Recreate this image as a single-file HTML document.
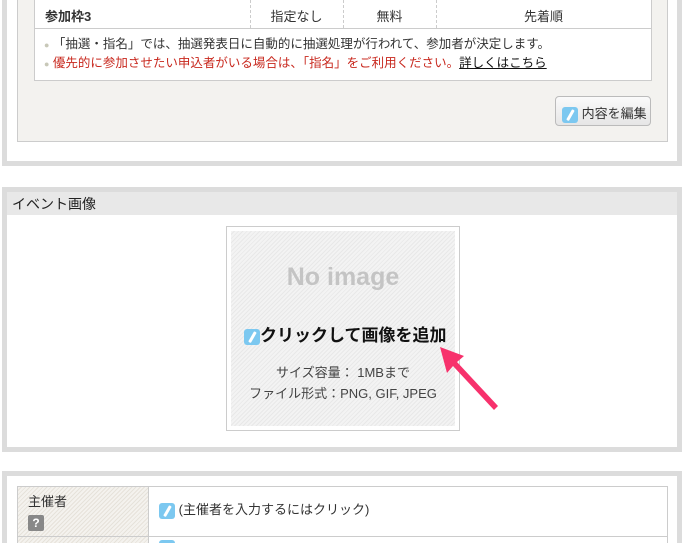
<!DOCTYPE html>
<html><head><meta charset="utf-8"><style>
*{margin:0;padding:0;box-sizing:border-box}
html,body{width:684px;height:543px;overflow:hidden}
body{background:#fff;font-family:"Liberation Sans","Noto Sans CJK JP",sans-serif;font-size:12px;color:#333;position:relative}
.abs{position:absolute}
.pen{display:inline-block;width:16px;height:16px;background:#7cc8f0;border-radius:3px;position:relative;vertical-align:middle}
.pen:after{content:"";position:absolute;left:7px;top:2px;width:2.5px;height:12px;background:#fff;transform:rotate(30deg);border-radius:1px}
.hatch{background:repeating-linear-gradient(135deg,#f3f3f3 0,#f3f3f3 2px,#e8e8e8 2px,#e8e8e8 3px)}
.hatch2{background:repeating-linear-gradient(135deg,#f4f2ee 0,#f4f2ee 2px,#e6e2da 2px,#e6e2da 3px)}
</style></head><body>
<div class="abs" style="left:2px;top:0;width:680px;height:166px;border:5px solid #dcdcdc;border-top:none;background:#fff"></div>
<div class="abs" style="left:17px;top:0;width:651px;height:142px;border:1px solid #ccc;border-top:none;background:#f3f2ef"></div>
<div class="abs" style="left:34px;top:0;width:618px;height:81px;border:1px solid #ccc;border-top:none;background:#fff"></div>
<div class="abs" style="left:34px;top:28px;width:618px;height:1px;background:#ccc"></div>
<div class="abs" style="left:250px;top:0;height:28px;border-left:1px dashed #ccc"></div>
<div class="abs" style="left:343px;top:0;height:28px;border-left:1px dashed #ccc"></div>
<div class="abs" style="left:436px;top:0;height:28px;border-left:1px dashed #ccc"></div>
<div class="abs" style="left:45px;top:6px;font-weight:bold;font-size:13px">参加枠3</div>
<div class="abs" style="left:250px;top:6px;width:93px;text-align:center;font-size:13px">指定なし</div>
<div class="abs" style="left:343px;top:6px;width:93px;text-align:center;font-size:13px">無料</div>
<div class="abs" style="left:436px;top:6px;width:215px;text-align:center;font-size:13px">先着順</div>
<div class="abs" style="left:44px;top:33px;font-size:12.5px;white-space:nowrap"><span style="color:#c8c8b8;font-size:9px">●</span> 「抽選・指名」では、抽選発表日に自動的に抽選処理が行われて、参加者が決定します。</div>
<div class="abs" style="left:44px;top:52px;font-size:12.5px;color:#c8281e;white-space:nowrap"><span style="color:#c8c8b8;font-size:9px">●</span> 優先的に参加させたい申込者がいる場合は、「指名」をご利用ください。<span style="color:#111;text-decoration:underline">詳しくはこちら</span></div>
<div class="abs" style="left:555px;top:96px;width:96px;height:30px;border:1px solid #bbb;border-radius:4px;background:linear-gradient(#fafafa,#e6e6e6);padding:6px 0 0 6px;font-size:13px;color:#333;white-space:nowrap"><span class="pen"></span> 内容を編集</div>
<div class="abs" style="left:2px;top:187px;width:680px;height:265px;border:5px solid #dcdcdc;background:#fff"></div>
<div class="abs" style="left:7px;top:192px;width:670px;height:23px;background:#e8e8e8;padding:2px 0 0 5px;font-size:14px;color:#222">イベント画像</div>
<div class="abs" style="left:226px;top:226px;width:234px;height:205px;border:1px solid #ccc;background:#fff"></div>
<div class="abs hatch" style="left:231px;top:231px;width:224px;height:195px"></div>
<div class="abs" style="left:231px;top:263px;width:224px;text-align:center;font-size:25px;font-weight:bold;color:#c4c4c4">No image</div>
<div class="abs" style="left:244px;top:321px;font-size:17px;font-weight:bold;color:#111;white-space:nowrap"><span class="pen"></span>クリックして画像を追加</div>
<div class="abs" style="left:231px;top:362px;width:224px;text-align:center;font-size:13px;color:#444;line-height:21px">サイズ容量： 1MBまで<br>ファイル形式：PNG, GIF, JPEG</div>
<svg class="abs" style="left:430px;top:340px" width="80" height="80"><path d="M10 7 L34 16 L27 22 L68 66 L64 70 L23 26 L17 33 Z" fill="#f7316c"/></svg>
<div class="abs" style="left:0;top:471px;width:684px;height:72px;overflow:hidden">
<div class="abs" style="left:2px;top:0;width:680px;height:72px;border:5px solid #dcdcdc;border-bottom:none;background:#fff"></div>
<div class="abs" style="left:17px;top:15px;width:651px;height:57px;border:1px solid #ccc;border-bottom:none"></div>
<div class="abs hatch2" style="left:18px;top:16px;width:130px;height:56px"></div>
<div class="abs" style="left:148px;top:16px;width:1px;height:56px;background:#ccc"></div>
<div class="abs" style="left:18px;top:65px;width:649px;height:1px;background:#ccc"></div>
<div class="abs" style="left:28px;top:20px;font-size:13px">主催者</div>
<div class="abs" style="left:28px;top:44px;width:16px;height:16px;background:#888;border-radius:2px;color:#fff;font-weight:bold;font-size:12px;text-align:center;line-height:16px">?</div>
<div class="abs" style="left:159px;top:28px;font-size:13px;white-space:nowrap"><span class="pen"></span> (主催者を入力するにはクリック)</div>
<div class="abs" style="left:159px;top:69px;width:16px;height:3px;background:#7cc8f0;border-radius:3px 3px 0 0"></div>
</div>
</body></html>
